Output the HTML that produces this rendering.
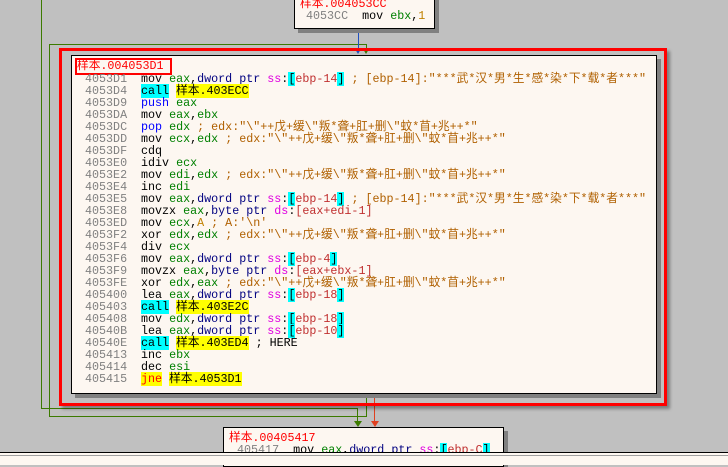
<!DOCTYPE html>
<html><head><meta charset="utf-8"><style>
*{margin:0;padding:0;box-sizing:border-box}
body{width:728px;height:465px;background:#c0c0c0;position:relative;overflow:hidden;font-family:"Liberation Mono","Noto Sans CJK SC",monospace;font-size:11.7px}
.abs{position:absolute}
.blk{position:absolute;background:#fdf7f1;border:1px solid #000;box-shadow:4px 4px 0 #808080}
.ln{position:absolute;left:85px;white-space:pre;line-height:12px;height:12px}
.a{color:#808080;display:inline-block;width:56px}
.g{color:#008000}.b{color:#0000ff}.n{color:#000080}.m{color:#e000e0}.r{color:#c03030}.c{color:#b06000}.o{color:#c08000}
.cy{background:#00ffff}.ye{background:#ffff00}.k{color:#000}.rd{color:#ff0000}
</style></head><body>
<div class="abs" style="left:41px;top:0;width:1px;height:408px;background:#3c7a00"></div>
<div class="abs" style="left:41px;top:408px;width:317px;height:1px;background:#3c7a00"></div>
<div class="abs" style="left:357px;top:408px;width:1px;height:15px;background:#3c7a00"></div>
<div class="abs" style="left:49px;top:44px;width:1px;height:372px;background:#3c7a00"></div>
<div class="abs" style="left:49px;top:416px;width:318px;height:1px;background:#3c7a00"></div>
<div class="abs" style="left:49px;top:44px;width:318px;height:1px;background:#3c7a00"></div>
<div class="abs" style="left:366px;top:44px;width:1px;height:6px;background:#3c7a00"></div>
<div class="abs" style="left:366px;top:395px;width:1px;height:21px;background:#3c7a00"></div>
<div class="abs" style="left:358px;top:29px;width:1px;height:20px;background:#2050c0"></div>
<div class="abs" style="left:374px;top:395px;width:1px;height:28px;background:#e04020"></div>
<div class="abs" style="left:355px;top:49px;border-left:3px solid transparent;border-right:3px solid transparent;border-top:5px solid #2050c0"></div>
<div class="abs" style="left:363px;top:49px;border-left:3px solid transparent;border-right:3px solid transparent;border-top:5px solid #3c7a00"></div>
<div class="abs" style="left:354px;top:421px;border-left:4px solid transparent;border-right:4px solid transparent;border-top:6px solid #3c7a00"></div>
<div class="abs" style="left:371px;top:421px;border-left:4px solid transparent;border-right:4px solid transparent;border-top:6px solid #e04020"></div>
<div class="blk" style="left:294px;top:-4px;width:141px;height:33px"></div>
<div class="abs" style="left:300px;top:-2px;line-height:12px;white-space:pre"><span class="rd">样本.004053CC</span></div>
<div class="abs" style="left:306px;top:10px;line-height:12px;white-space:pre"><span style="color:#808080">4053CC</span>  mov <span class="g">ebx</span>,<span class="o">1</span></div>
<div class="abs" style="left:59px;top:48px;width:608px;height:358px;border:3px solid #ff0000;box-shadow:3px 3px 3px rgba(0,0,0,.35)"></div>
<div class="blk" style="left:71px;top:55px;width:586px;height:339px"></div>
<div class="abs" style="left:75px;top:58px;width:97px;height:17px;border:2px solid #ff0000"></div>
<div class="abs rd" style="left:77px;top:60px;line-height:13px">样本.004053D1</div>
<div class="ln" style="top:73px"><span class="a">4053D1</span>mov <span class="g">eax</span>,<span class="n">dword ptr</span> <span class="m">ss</span>:<span class="cy">[</span><span class="r">ebp-14</span><span class="cy">]</span> <span class="c">; [ebp-14]:"***武*汉*男*生*感*染*下*载*者***"</span></div>
<div class="ln" style="top:85px"><span class="a">4053D4</span><span class="cy">call</span> <span class="ye">样本.403ECC</span></div>
<div class="ln" style="top:97px"><span class="a">4053D9</span><span class="b">push</span> <span class="g">eax</span></div>
<div class="ln" style="top:109px"><span class="a">4053DA</span>mov <span class="g">eax</span>,<span class="g">ebx</span></div>
<div class="ln" style="top:121px"><span class="a">4053DC</span><span class="b">pop</span> <span class="g">edx</span> <span class="c">; edx:"\"++戊+缓\"叛*聋+肛+删\"蚊*苜+兆++*"</span></div>
<div class="ln" style="top:133px"><span class="a">4053DD</span>mov <span class="g">ecx</span>,<span class="g">edx</span> <span class="c">; edx:"\"++戊+缓\"叛*聋+肛+删\"蚊*苜+兆++*"</span></div>
<div class="ln" style="top:145px"><span class="a">4053DF</span>cdq</div>
<div class="ln" style="top:157px"><span class="a">4053E0</span>idiv <span class="g">ecx</span></div>
<div class="ln" style="top:169px"><span class="a">4053E2</span>mov <span class="g">edi</span>,<span class="g">edx</span> <span class="c">; edx:"\"++戊+缓\"叛*聋+肛+删\"蚊*苜+兆++*"</span></div>
<div class="ln" style="top:181px"><span class="a">4053E4</span>inc <span class="g">edi</span></div>
<div class="ln" style="top:193px"><span class="a">4053E5</span>mov <span class="g">eax</span>,<span class="n">dword ptr</span> <span class="m">ss</span>:<span class="cy">[</span><span class="r">ebp-14</span><span class="cy">]</span> <span class="c">; [ebp-14]:"***武*汉*男*生*感*染*下*载*者***"</span></div>
<div class="ln" style="top:205px"><span class="a">4053E8</span>movzx <span class="g">eax</span>,<span class="n">byte ptr</span> <span class="m">ds</span>:<span class="r">[eax+edi-1]</span></div>
<div class="ln" style="top:217px"><span class="a">4053ED</span>mov <span class="g">ecx</span>,<span class="o">A</span> <span class="c">; A:'\n'</span></div>
<div class="ln" style="top:229px"><span class="a">4053F2</span>xor <span class="g">edx</span>,<span class="g">edx</span> <span class="c">; edx:"\"++戊+缓\"叛*聋+肛+删\"蚊*苜+兆++*"</span></div>
<div class="ln" style="top:241px"><span class="a">4053F4</span>div <span class="g">ecx</span></div>
<div class="ln" style="top:253px"><span class="a">4053F6</span>mov <span class="g">eax</span>,<span class="n">dword ptr</span> <span class="m">ss</span>:<span class="cy">[</span><span class="r">ebp-4</span><span class="cy">]</span></div>
<div class="ln" style="top:265px"><span class="a">4053F9</span>movzx <span class="g">eax</span>,<span class="n">byte ptr</span> <span class="m">ds</span>:<span class="r">[eax+ebx-1]</span></div>
<div class="ln" style="top:277px"><span class="a">4053FE</span>xor <span class="g">edx</span>,<span class="g">eax</span> <span class="c">; edx:"\"++戊+缓\"叛*聋+肛+删\"蚊*苜+兆++*"</span></div>
<div class="ln" style="top:289px"><span class="a">405400</span>lea <span class="g">eax</span>,<span class="n">dword ptr</span> <span class="m">ss</span>:<span class="cy">[</span><span class="r">ebp-18</span><span class="cy">]</span></div>
<div class="ln" style="top:301px"><span class="a">405403</span><span class="cy">call</span> <span class="ye">样本.403E2C</span></div>
<div class="ln" style="top:313px"><span class="a">405408</span>mov <span class="g">edx</span>,<span class="n">dword ptr</span> <span class="m">ss</span>:<span class="cy">[</span><span class="r">ebp-18</span><span class="cy">]</span></div>
<div class="ln" style="top:325px"><span class="a">40540B</span>lea <span class="g">eax</span>,<span class="n">dword ptr</span> <span class="m">ss</span>:<span class="cy">[</span><span class="r">ebp-10</span><span class="cy">]</span></div>
<div class="ln" style="top:337px"><span class="a">40540E</span><span class="cy">call</span> <span class="ye">样本.403ED4</span> ; HERE</div>
<div class="ln" style="top:349px"><span class="a">405413</span>inc <span class="g">ebx</span></div>
<div class="ln" style="top:361px"><span class="a">405414</span>dec <span class="g">esi</span></div>
<div class="ln" style="top:373px"><span class="a">405415</span><span class="ye rd">jne</span> <span class="ye">样本.4053D1</span></div>
<div class="blk" style="left:223px;top:427px;width:281px;height:40px"></div>
<div class="abs rd" style="left:229px;top:432px;line-height:13px">样本.00405417</div>
<div class="abs" style="left:237px;top:444px;line-height:13px;white-space:pre"><span style="color:#808080">405417</span>  mov <span class="g">eax</span>,<span class="n">dword ptr</span> <span class="m">ss</span>:<span class="cy">[</span><span class="r">ebp-C</span><span class="cy">]</span></div>
<div class="abs" style="left:0;top:452px;width:728px;height:13px;background:#fdf7f1;border-top:1px solid #000"></div>
<div class="abs" style="left:0;top:455px;width:728px;height:1px;background:#a0a0a0"></div>
</body></html>
